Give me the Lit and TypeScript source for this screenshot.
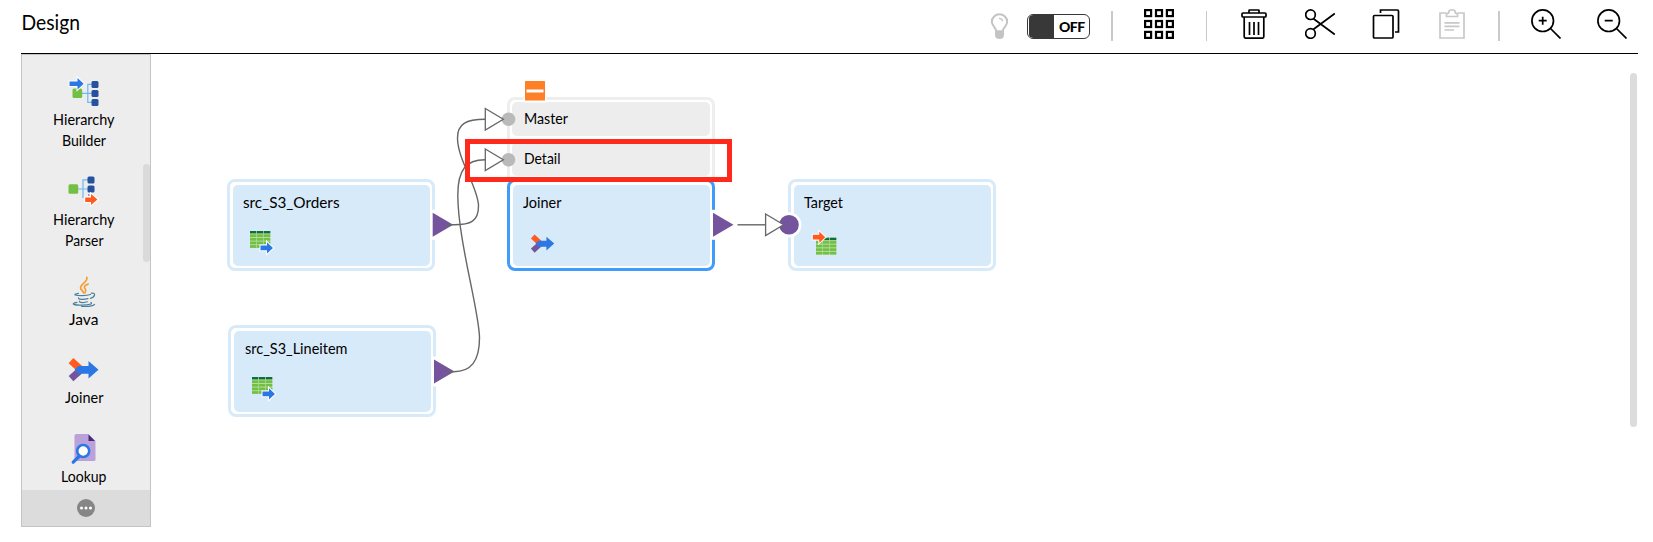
import { LitElement, html, svg, css } from "lit";
import { customElement } from "lit/decorators.js";

const label = (text: string, width: number, size = 16) => html`
  <svg class="label" width=${width} height="21" viewBox="0 0 ${width} 21">
    <text x="0" y="15" font-size=${size} textLength=${width} lengthAdjust="spacingAndGlyphs">${text}</text>
  </svg>`;

const joinerShape = svg`
  <path d="M3.500 3 L15 13.500" stroke="#ff5a1f" stroke-width="7"/>
  <path d="M3.500 21 L13 12.500" stroke="#73549d" stroke-width="7"/>
  <path d="M7 12 L11 8.200 H21 V3.200 L31 12 L21 20.800 V16 H11 Z" fill="#2b77e5"/>`;

const table = svg`
  <rect width="20.300" height="17" fill="#b5dc9c"/>
  <g fill="#71bf44">
    ${[3.4, 7, 10.6, 14.2].map((y) => [0, 7, 14].map((x) => svg`<rect x=${x} y=${y} width="6.300" height="2.600"/>`))}
  </g>
  <g fill="#0f6f3c"><rect width="6.300" height="2.400"/><rect x="7" width="6.300" height="2.400"/><rect x="14" width="6.300" height="2.400"/></g>`;

const arrow = (fill: string) => svg`
  <path d="M0 3.300 H6.500 V0 L12.500 5.700 L6.500 11.400 V8.100 H0 Z" fill=${fill} stroke="#fff" stroke-width="2" paint-order="stroke"/>`;

const sourceIcon = html`<svg class="node-icon" width="26" height="26">
  ${table}<g transform="translate(10.500 11.200)">${arrow("#2b77e5")}</g></svg>`;
const targetIcon = html`<svg class="node-icon target-icon" width="28" height="28">
  <g transform="translate(4 6.700)">${table}</g><g transform="translate(.8 .5)">${arrow("#ff5a1f")}</g></svg>`;
const joinerIcon = html`<svg class="node-icon joiner-icon" width="25" height="20" viewBox="0 0 32 25">${joinerShape}</svg>`;

const paletteItems = [
  {
    lines: [["Hierarchy", 61.5], ["Builder", 44]],
    icon: svg`<g transform="translate(-68.500 -76)">
      <path d="M80 93.300 H94 M96 84.300 H88.300 V102.300 H96" fill="none" stroke="#6bb8f5" stroke-width="1.200"/>
      <rect x="73" y="88.500" width="9.700" height="9.500" rx="1.500" fill="#71bf44"/>
      ${[81, 90, 99].map((y) => svg`<rect x="92" y=${y} width="7" height="7" rx="1.500" fill="#26519f"/>`)}
      <path d="M70 81.500 H78 V78 L84.200 83.700 L78 89.500 V86 H70 Z" fill="#2b77e5" stroke="#fff" stroke-width="2" paint-order="stroke"/></g>`,
  },
  {
    lines: [["Hierarchy", 61.5], ["Parser", 38.5]],
    icon: svg`<g transform="translate(-68.500 -175.500)">
      <path d="M77 188.500 H90 M91 179.300 H83.500 V197.500" fill="none" stroke="#6bb8f5" stroke-width="1.200"/>
      <rect x="69" y="183.800" width="9.700" height="9.500" rx="1.500" fill="#71bf44"/>
      <rect x="88" y="176" width="7" height="7" rx="1.500" fill="#26519f"/>
      <rect x="88" y="185" width="7" height="7" rx="1.500" fill="#26519f"/>
      <path d="M88.500 194.500 H90" stroke="#26519f"/>
      <path d="M85.700 197 H91.500 V193.500 L98 199 L91.500 204.500 V201.500 H85.700 Z" fill="#ff5a1f" stroke="#fff" stroke-width="2" paint-order="stroke"/></g>`,
  },
  {
    lines: [["Java", 29.5]],
    icon: svg`<g transform="translate(-68.500 -274.500)" fill="none" stroke-linecap="round">
      <g stroke="#f8982d" stroke-width="1.600"><path d="M87.300 275.800 C89 281 79 283 81.300 287.500 C82.300 289 84 290 84.300 291.500"/>
      <path d="M88.700 282.500 C83.700 284.500 84.200 286 86 288 C86.700 289.200 86 290 85.500 291.300"/></g>
      <g stroke="#4b809c" stroke-width="1.200"><path d="M79 291.800 C72 293 76 294.200 83 294.100 Q88 293.900 91 293"/>
      <path d="M91.800 291.700 C97 291 95.500 295.500 91 296.800"/>
      <path d="M79 296.300 C78.500 298.200 84 298.300 88.500 297.200"/><path d="M80 299.700 C80 301.400 85 301.400 87.800 300.300"/>
      <path d="M77.500 300.800 C70 302.300 75 303.800 83 303.700 C90 303.600 93.500 302.300 91.500 301"/><path d="M82 304.900 C89 305.200 94 304.500 95 302.900"/></g></g>`,
  },
  { lines: [["Joiner", 38.5]], icon: svg`<g transform="translate(-.5 3.700)">${joinerShape}</g>` },
  {
    lines: [["Lookup", 45.5]],
    icon: svg`<g transform="translate(-68.500 -432)">
      <path d="M77 433 H89 L96 440 V458.500 Q96 460 94.500 460 H76.500 Q75 460 75 458.500 V434.500 Q75 433 77 433Z" fill="#b9a2da"/>
      <path d="M89 433.500 V440 H95.500 Z" fill="#472a78"/>
      <path d="M79 456 L73.700 461.200" stroke="#2b77e5" stroke-width="3.200" stroke-linecap="round"/>
      <circle cx="83.700" cy="450" r="6" fill="#fff" stroke="#2b77e5" stroke-width="2.600"/></g>`,
  },
] as { lines: [string, number][]; icon: unknown }[];

@customElement("design-toolbar")
class DesignToolbar extends LitElement {
  static styles = css`
    :host { display: flex; box-sizing: border-box; height: 53px; margin-left: 21px; padding: 9px 26px 0 0; }
    svg { display: block; flex: none; fill: none; stroke: #000; stroke-width: 1.7; }
    .label { margin-top: 3px; overflow: visible; fill: #000; stroke: none; font-family: Lato, sans-serif; }
    .title { margin: 0 auto 0 0; }
    .toggle { display: flex; box-sizing: border-box; width: 63px; height: 25px; margin: 5px 21px 0 18px; padding: 0 0 0 1px;
      border: 1px solid #383838; border-radius: 6px; overflow: hidden; }
    .knob { width: 25px; background: #383838; border-radius: 4px 0 0 4px; }
    .state { flex: 1; padding-left: 5px; font: 900 14px/23px Lato, sans-serif; letter-spacing: -.5px; }
    .sep { width: 2px; height: 30px; margin-top: 2px; background: #c9c9c9; }
    .thin { width: 1px; }
    .edit { display: flex; gap: 36px; margin: 0 31px 0 32px; }
    .zoom { display: flex; gap: 36px; margin-left: 31px; }
    .grid { margin: 0 32px 0 31px; stroke-width: 2.2; }
    .bulb { margin-top: 4px; }
  `;
  render() {
    const lens = (plus: boolean) => html`<svg width="30" height="30">
      <circle cx="11.700" cy="11.700" r="10.800"/><path d="M19.500 19.500 L29.500 29.500 M7.700 11.700 H15.700 ${plus ? "M11.700 7.700 V15.700" : ""}"/></svg>`;
    return html`
      <div class="title"><svg class="label" width="60" height="21"><text x=".5" y="18.300" font-size="20.500" textLength="58.500" lengthAdjust="spacingAndGlyphs">Design</text></svg></div>
      <svg class="bulb" width="19" height="27">
        <path d="M6.300 18.500 C6 14 1.800 13 1.800 8.800 A7.700 7.500 0 0 1 17.200 8.800 C17.200 13 13 14 12.700 18.500 Z" stroke="#c4c4c4" stroke-width="2"/>
        <path d="M9 5.300 Q12 5.300 12.700 8" stroke="#c4c4c4" stroke-width="1.300"/>
        <path d="M5 17.500 H14 V22 Q14 26 9.500 26 Q5 26 5 22 Z" fill="#c4c4c4" stroke="none"/></svg>
      <div class="toggle"><span class="knob"></span><span class="state">OFF</span></div>
      <span class="sep"></span>
      <svg class="grid" width="30" height="30">
        ${[1.1, 12, 22.9].map((y) => [1.1, 12, 22.9].map((x) => svg`<rect x=${x} y=${y} width="6" height="6"/>`))}</svg>
      <span class="sep thin"></span>
      <div class="edit">
        <svg width="30" height="30">
          <rect x="3" y="4" width="24" height="4" rx="1"/><path d="M10 4 V1.500 Q10 1 10.500 1 H19.500 Q20 1 20 1.500 V4"/>
          <path d="M5.200 8 V27.500 Q5.200 29.200 7 29.200 H23 Q24.800 29.200 24.800 27.500 V8 M10.500 13 V26 M15 13 V26 M19.500 13 V26"/></svg>
        <svg width="30" height="30">
          <circle cx="5.500" cy="5.700" r="4.800"/><circle cx="5.500" cy="24.500" r="4.800"/>
          <path d="M8.500 9.700 L29.800 25.500 M8.500 20.300 L29.800 4.500"/></svg>
        <svg width="30" height="30">
          <rect x="2.500" y="6.500" width="19.500" height="22.500" rx="1"/><path d="M9.500 4 V1 H26.500 Q27.500 1 27.500 2 V23 H24"/></svg>
        <svg width="30" height="30"><g stroke="#c8c8c8">
          <path d="M9 4 H3 V29 H27 V4 H21"/><path d="M9.500 7.500 V4.500 Q12 4.500 12 2.500 Q12 1 14 1 H16 Q18 1 18 2.500 Q18 4.500 20.500 4.500 V7.500 Z"/>
          <path d="M7.500 13.800 H22.500 M7.500 17.300 H22.500 M7.500 21 H17"/></g></svg>
      </div>
      <span class="sep"></span>
      <div class="zoom">${lens(true)}${lens(false)}</div>`;
  }
}

@customElement("transform-palette")
class TransformPalette extends LitElement {
  static styles = css`
    :host { position: relative; display: flex; flex-direction: column; box-sizing: border-box; width: 130px; height: 473px;
      border: 1px solid #c4c4c4; background: #ededed; }
    .items { flex: 1; min-height: 0; overflow: hidden; padding: 21px 4px 0 0; }
    .item { display: flex; flex-direction: column; align-items: center; margin-bottom: 23.8px; }
    .icon { display: block; margin-bottom: 2px; overflow: visible; }
    .label { display: block; overflow: visible; font-family: Lato, sans-serif; }
    .more { flex: none; display: flex; height: 36.5px; align-items: center; justify-content: center; background: #dcdcdc; }
    .thumb { position: absolute; right: 0; top: 109px; width: 7px; height: 98px; border-radius: 4px; background: #dadada; }
  `;
  render() {
    return html`
      <div class="items">${paletteItems.map((item) => html`
        <div class="item">
          <svg class="icon" width="32" height="32">${item.icon}</svg>
          ${item.lines.map(([text, width]) => label(text, width))}
        </div>`)}</div>
      <div class="more"><svg width="18" height="18"><circle cx="9" cy="9" r="9" fill="#868686"/>
        <g fill="#fff"><circle cx="4.500" cy="9" r="1.500"/><circle cx="9" cy="9" r="1.500"/><circle cx="13.500" cy="9" r="1.500"/></g></svg></div>
      <span class="thumb"></span>`;
  }
}

@customElement("mapping-canvas")
class MappingCanvas extends LitElement {
  static styles = css`
    :host { position: relative; display: block; flex: 1; height: 488px; overflow: hidden; }
    .node { position: absolute; box-sizing: border-box; width: 208px; height: 92px; padding: 2.5px;
      border: 3px solid #d7eafa; border-radius: 8px; background: #fff; }
    .body { box-sizing: border-box; height: 100%; padding: 8px 0 0 10.5px; border-radius: 5px; background: #d7eafa; }
    .label { display: block; overflow: visible; font-family: Lato, sans-serif; }
    .node-icon { display: block; margin: 17.5px 0 0 7px; overflow: visible; }
    .target-icon { margin-left: 8px; }
    .joiner-icon { margin-top: 20px; }
    .orders { left: 76px; top: 125px; }
    .lineitem { left: 77px; top: 271px; }
    .lineitem .body { padding-left: 11.5px; }
    .joiner { left: 356px; top: 125px; border-color: #409cfb; }
    .target { left: 637px; top: 125px; }
    .groups { position: absolute; left: 356px; top: 43px; box-sizing: border-box; width: 208px; height: 84px;
      display: flex; flex-direction: column; gap: 6px; padding: 2px; border: 3px solid #eee; border-radius: 8px 8px 0 0; }
    .group { box-sizing: border-box; height: 35px; padding: 6.5px 0 0 12px; border-radius: 5px; background: #ededed; }
    .links { position: absolute; inset: 0; }
    .thumb { position: absolute; right: 16px; top: 19px; width: 7px; height: 354px; border-radius: 4px; background: #dcdcdc; }
  `;
  render() {
    const output = (x: number, y: number) => svg`
      <path d="M${x - 2} ${y - 15} H${x + 4} V${y + 15} H${x - 2} Z" fill="#fff"/>
      <path d="M${x} ${y - 12} L${x + 20.5} ${y} L${x} ${y + 12} Z" fill="#73549d"/>`;
    const input = (x: number, y: number) => svg`
      <path d="M${x} ${y - 10.8} L${x + 18} ${y} L${x} ${y + 10.8} Z" fill="#fff" stroke="#666" stroke-width="1.300"/>`;
    return html`
      <div class="groups">
        <div class="group">${label("Master", 44)}</div>
        <div class="group">${label("Detail", 36.5)}</div>
      </div>
      <div class="node orders"><div class="body">${label("src_S3_Orders", 96.5)}${sourceIcon}</div></div>
      <div class="node lineitem"><div class="body">${label("src_S3_Lineitem", 102.5)}${sourceIcon}</div></div>
      <div class="node joiner"><div class="body">${label("Joiner", 38.5)}${joinerIcon}</div></div>
      <div class="node target"><div class="body">${label("Target", 39)}${targetIcon}</div></div>
      <svg class="links" width="1502" height="488" viewBox="151 54 1502 488">
        <path d="M509 134 V144 M714 134 V144" stroke="#fff" stroke-width="0"/>
        <rect x="523.500" y="79.500" width="23" height="23" fill="#fff"/>
        <rect x="525" y="81" width="20" height="19.500" rx=".5" fill="#ff7f27"/>
        <rect x="526.500" y="89.500" width="17" height="3" fill="#fff"/>
        ${output(432.7, 224.8)}${output(434, 371.5)}${output(713, 224.8)}
        <circle cx="508.500" cy="119.300" r="6.800" fill="#b9b9b9"/><circle cx="508.500" cy="159.800" r="6.800" fill="#b9b9b9"/>
        <circle cx="789" cy="224.800" r="12.500" fill="#fff"/><circle cx="789" cy="224.800" r="9.800" fill="#73549d"/>
        <g fill="none" stroke="#666" stroke-width="1.400">
          <path d="M446 224.800 H453 C471 225 478.500 221 478.500 206 C478.500 188 457.500 160 457.500 138 C457.500 124 466 119.300 485 119.300"/>
          <path d="M446 371.700 H453 C471 372 479.500 361 479.500 338 C479.500 312 457.800 240 457.800 195 C457.800 170 466 159.800 485 159.800"/>
          <path d="M737.500 224.800 H765"/></g>
        ${input(485.3, 119.3)}${input(485.3, 159.8)}${input(765.6, 224.8)}
        <rect x="467.500" y="141.500" width="262" height="38" fill="none" stroke="#ff291c" stroke-width="5"/>
      </svg>
      <span class="thumb"></span>`;
  }
}

@customElement("app-root")
class AppRoot extends LitElement {
  static styles = css`
    :host { display: block; width: 100%; height: 542px; overflow: hidden; background: #fff; color: #000; }
    .rule { height: 1px; margin: 0 15px 0 21px; background: #000; }
    .workspace { display: flex; padding-left: 21px; }
  `;
  render() {
    return html`
      <design-toolbar></design-toolbar>
      <div class="rule"></div>
      <div class="workspace"><transform-palette></transform-palette><mapping-canvas></mapping-canvas></div>`;
  }
}
